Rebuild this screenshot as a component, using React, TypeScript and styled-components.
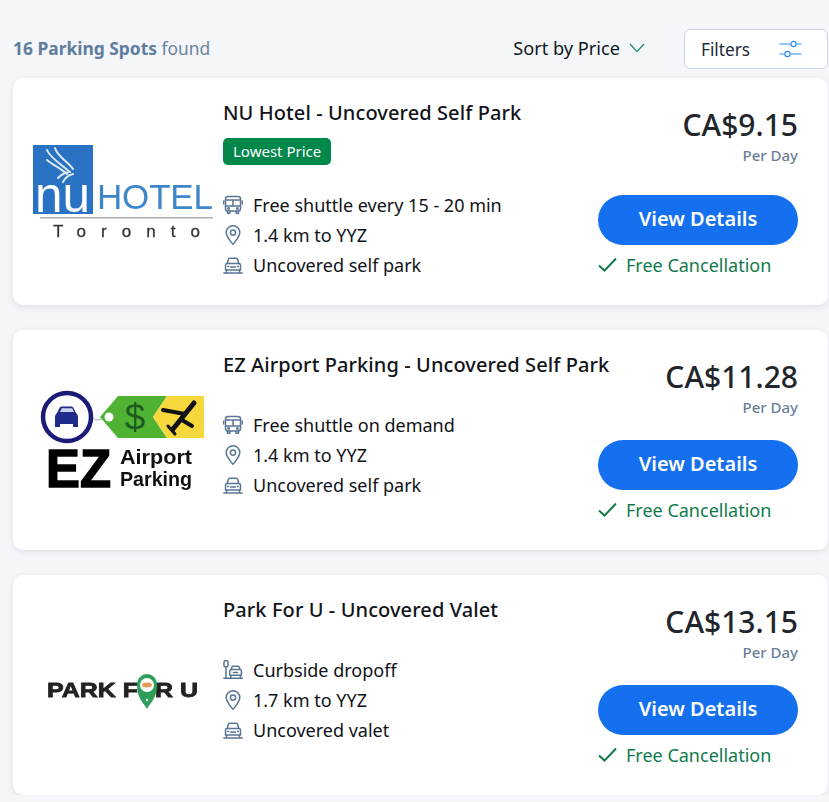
import styled, { createGlobalStyle } from "styled-components";

const GlobalStyle = createGlobalStyle`
  html, body {
    margin: 0;
    padding: 0;
    background: #f4f6f9;
    font-family: "Noto Sans", "Open Sans", sans-serif;
  }
  * {
    box-sizing: border-box;
  }
`;

const Page = styled.div`
  width: 829px;
  padding: 29px 1px 0 13px;
`;

const Toolbar = styled.div`
  display: flex;
  align-items: center;
  height: 40px;
  margin-bottom: 9px;
`;

const Found = styled.div`
  flex: 1;
  font-size: 17.4px;
  color: #6d8299;
  margin-top: -2px;
  & b {
    font-weight: 700;
    color: #5f7d9d;
  }
`;

const Sort = styled.div`
  display: flex;
  align-items: center;
  gap: 9px;
  font-size: 18.2px;
  color: #111820;
  margin-right: 39px;
  margin-top: -2px;
`;

const FilterButton = styled.div`
  width: 144px;
  height: 40px;
  display: flex;
  align-items: center;
  justify-content: space-between;
  padding: 0 25px 0 16px;
  background: #fff;
  border: 1px solid #c8d4e6;
  border-radius: 6px;
  font-size: 17.2px;
  color: #222b36;
`;

const List = styled.div`
  display: flex;
  flex-direction: column;
  gap: 25px;
`;

const Card = styled.div`
  display: flex;
  min-height: 220px;
  background: #fff;
  border-radius: 10px;
  box-shadow: 0 2px 6px rgba(60, 80, 110, 0.12);
`;

const LogoBox = styled.div`
  width: 210px;
  padding-left: 20px;
  display: flex;
  align-items: center;
  flex-shrink: 0;
  & svg {
    display: block;
    filter: blur(0.4px);
  }
`;

const Main = styled.div`
  flex: 1;
  min-width: 0;
  padding: 20px 0 25px;
`;

const Title = styled.div`
  font-size: 20px;
  font-weight: 500;
  letter-spacing: 0.09px;
  line-height: 30px;
  white-space: nowrap;
  color: #111419;
`;

const Badge = styled.div`
  display: inline-block;
  height: 27px;
  line-height: 27px;
  margin-top: 10px;
  padding: 0 10px;
  background: #00874a;
  border-radius: 5px;
  color: #fff;
  font-size: 15px;
`;

const Features = styled.div<{ $top: number }>`
  display: flex;
  flex-direction: column;
  margin-top: ${(p) => p.$top}px;
`;

const Feature = styled.div`
  display: flex;
  align-items: center;
  gap: 10px;
  height: 30px;
  font-size: 18px;
  color: #0f1318;
`;

const Side = styled.div`
  width: 200px;
  margin-right: 30px;
  padding: 29px 0 27px;
  flex-shrink: 0;
  display: flex;
  flex-direction: column;
  justify-content: space-between;
`;

const PriceBlock = styled.div`
  text-align: right;
`;

const Price = styled.div`
  font-size: 30px;
  font-weight: 500;
  line-height: 36px;
  color: #22262b;
`;

const PerDay = styled.div`
  font-size: 15px;
  font-weight: 500;
  line-height: 24px;
  color: #6c7f97;
`;

const Details = styled.div`
  height: 50px;
  padding-bottom: 3px;
  border-radius: 25px;
  background: #1570ef;
  color: #fff;
  font-size: 20px;
  font-weight: 600;
  display: flex;
  align-items: center;
  justify-content: center;
`;

const Cancel = styled.div`
  display: flex;
  align-items: center;
  gap: 9px;
  margin-top: 7px;
  height: 26px;
  font-size: 18px;
  color: #0f7b4b;
`;

const iconProps = {
  width: 20,
  height: 20,
  viewBox: "0 0 20 20",
  fill: "none",
  stroke: "#5a7595",
  strokeWidth: 1.5,
  strokeLinecap: "round" as const,
  strokeLinejoin: "round" as const,
};

const BusIcon = () => (
  <svg {...iconProps}>
    <rect x="2.5" y="1.5" width="15" height="14.5" rx="2.5" />
    <path d="M2.5 5h15M2.5 11h15M10 5v6M.7 6v3M19.3 6v3" />
    <path d="M4.5 16v2.2h2.4V16M13.1 16v2.2h2.4V16" />
    <circle cx="5.6" cy="13.5" r=".7" />
    <circle cx="14.4" cy="13.5" r=".7" />
  </svg>
);

const PinIcon = () => (
  <svg {...iconProps}>
    <path d="M10 19.4C6.5 15 3.2 11.6 3.2 7.6a6.8 6.8 0 0 1 13.6 0c0 4-3.3 7.4-6.8 11.8z" />
    <circle cx="10" cy="7.6" r="2.6" />
  </svg>
);

const CarIcon = () => (
  <svg {...iconProps}>
    <path d="M4.2 8.5l1.2-4.2c.2-.7.8-1.1 1.5-1.1h6.2c.7 0 1.3.4 1.5 1.1l1.2 4.2" />
    <path d="M2.5 10.2c0-1 .7-1.7 1.7-1.7h11.6c1 0 1.7.7 1.7 1.7V15h-15z" />
    <path d="M3.5 15v2M16.500 15v2M.8 18h18.400M7.500 12h5M4.600 11.600h.8M14.600 11.600h.8" />
  </svg>
);

const CurbIcon = () => (
  <svg {...iconProps}>
    <rect x="1" y="0.8" width="4" height="6" rx="1.4" />
    <path d="M3 6.800v11.400M.8 18.200h18.600" />
    <path d="M8.200 9.500l.8-2.400c.2-.6.6-.9 1.200-.9h4.800c.6 0 1 .3 1.200.9l.8 2.400" />
    <path d="M6.800 11c0-.9.6-1.500 1.500-1.500h8.600c.9 0 1.500.6 1.500 1.500v4.200H6.800zM7.800 15.200v3M17.400 15.200v3M10.500 12.600h4.200" />
  </svg>
);

const Chevron = () => (
  <svg width="16" height="10" viewBox="0 0 16 10" fill="none" stroke="#17935f" strokeWidth="1.3">
    <path d="M1 1l7 7.600L15 1" />
  </svg>
);

const Sliders = () => (
  <svg width="23" height="18" viewBox="0 0 23 18" fill="none" stroke="#2a8df0" strokeWidth="1.2">
    <path d="M.5 4h11M17.500 4h5M.5 14h5M11.500 14h11" />
    <circle cx="14.500" cy="4" r="2.600" />
    <circle cx="8.500" cy="14" r="2.600" />
  </svg>
);

const Check = () => (
  <svg width="19" height="16" viewBox="0 0 19 16" fill="none" stroke="#0f7b4b" strokeWidth="2">
    <path d="M1 8.500l5.500 5.200L18 1.500" />
  </svg>
);

const NuLogo = () => (
  <svg width="180" height="180" viewBox="0 0 180 180">
    <rect x="0" y="43" width="60" height="69" fill="#2a73c4" />
    <g fill="none" stroke="#dce9f6" strokeWidth="2" strokeLinecap="round">
      <path d="M14 48c3 8 14 14 23 22" />
      <path d="M22 46c2 8 12 13 18 21" />
      <path d="M14 58c6 5 13 8 20 14" />
      <path d="M25 76c3-3 8-6 12-6" />
      <path d="M30 80c2-4 6-7 10-8" />
    </g>
    <text x="2" y="110" fontFamily="Liberation Sans, sans-serif" fontSize="50" fill="#fff" textLength="55" lengthAdjust="spacingAndGlyphs">
      nu
    </text>
    <text x="64" y="107" fontFamily="Liberation Sans, sans-serif" fontSize="35" fill="#3f86c9" textLength="116" lengthAdjust="spacing">
      HOTEL
    </text>
    <rect x="7" y="115" width="173" height="1.500" fill="#b9a9b0" />
    <text x="20" y="135" fontFamily="Liberation Sans, sans-serif" fontSize="17" fill="#333" stroke="#333" strokeWidth=".3" textLength="147" lengthAdjust="spacing">
      Toronto
    </text>
  </svg>
);

const EzLogo = () => (
  <svg width="180" height="180" viewBox="0 0 180 180">
    <path d="M58 67c4 4 9 4 13 0" fill="none" stroke="#9aa" strokeWidth="1" />
    <circle cx="34" cy="67" r="24" fill="#fff" stroke="#1c1b78" strokeWidth="4.500" />
    <path
      d="M22 77v-10c0-2 .8-3 2-4l2.500-5c.5-1 1.500-1.500 2.500-1.500h9c1 0 2 .5 2.500 1.500l2.500 5c1.200 1 2 2 2 4v10h-5v-3H27v3z"
      fill="#1f2c8c"
    />
    <path d="M27 62l1.800-3.800h10.400L41 62z" fill="#cfd3ea" />
    <path d="M67 67L85 46h49l-14 21 14 21H85z" fill="#4fb233" />
    <path d="M134 46h37v42h-37l-14-21z" fill="#f6d83c" />
    <circle cx="76" cy="67" r="4.500" fill="#fff" />
    <text x="102" y="80" fontFamily="Liberation Sans, sans-serif" fontSize="37" textAnchor="middle" fill="#1d5b20">
      $
    </text>
    <g fill="none" stroke="#111" strokeLinecap="round">
      <path d="M161 53L140 79" strokeWidth="5" />
      <path d="M152 64L130 60" strokeWidth="4" />
      <path d="M149 70L159 76" strokeWidth="4" />
      <path d="M135 76L142 84" strokeWidth="3" />
    </g>
    <text x="13" y="137" fontFamily="Liberation Sans, sans-serif" fontWeight="700" fontSize="54" fill="#000" stroke="#000" strokeWidth="1.500" textLength="65" lengthAdjust="spacingAndGlyphs">
      EZ
    </text>
    <text x="87" y="113.500" fontFamily="Liberation Sans, sans-serif" fontWeight="700" fontSize="20" fill="#111" textLength="72" lengthAdjust="spacingAndGlyphs">
      Airport
    </text>
    <text x="87" y="135.500" fontFamily="Liberation Sans, sans-serif" fontWeight="700" fontSize="20" fill="#111" textLength="72" lengthAdjust="spacingAndGlyphs">
      Parking
    </text>
  </svg>
);

const ParkLogo = () => (
  <svg width="180" height="180" viewBox="0 0 180 180">
    <text x="14" y="102" fontFamily="Liberation Sans, sans-serif" fontWeight="700" fontSize="21" fill="#222" stroke="#222" strokeWidth=".8" textLength="91" lengthAdjust="spacingAndGlyphs">
      PARK F
    </text>
    <text x="122" y="102" fontFamily="Liberation Sans, sans-serif" fontWeight="700" fontSize="21" fill="#222" stroke="#222" strokeWidth=".8" textLength="43" lengthAdjust="spacingAndGlyphs">
      R U
    </text>
    <path d="M114 114c-3-6-10-10-10-25a10 10 0 0 1 20 0c0 15-7 19-10 25z" fill="#2f9e5b" />
    <circle cx="114" cy="90" r="7" fill="#fff" />
    <ellipse cx="114" cy="90" rx="5" ry="2.500" fill="#e59a56" />
    <circle cx="114" cy="105" r="1.200" fill="#fff" />
  </svg>
);

type Spot = {
  title: string;
  logo: React.ReactNode;
  badge?: string;
  price: string;
  featuresTop: number;
  features: { icon: React.ReactNode; text: string }[];
};

const spots: Spot[] = [
  {
    title: "NU Hotel - Uncovered Self Park",
    logo: <NuLogo />,
    badge: "Lowest Price",
    price: "CA$9.15",
    featuresTop: 25,
    features: [
      { icon: <BusIcon />, text: "Free shuttle every 15 - 20 min" },
      { icon: <PinIcon />, text: "1.4 km to YYZ" },
      { icon: <CarIcon />, text: "Uncovered self park" },
    ],
  },
  {
    title: "EZ Airport Parking - Uncovered Self Park",
    logo: <EzLogo />,
    price: "CA$11.28",
    featuresTop: 30,
    features: [
      { icon: <BusIcon />, text: "Free shuttle on demand" },
      { icon: <PinIcon />, text: "1.4 km to YYZ" },
      { icon: <CarIcon />, text: "Uncovered self park" },
    ],
  },
  {
    title: "Park For U - Uncovered Valet",
    logo: <ParkLogo />,
    price: "CA$13.15",
    featuresTop: 30,
    features: [
      { icon: <CurbIcon />, text: "Curbside dropoff" },
      { icon: <PinIcon />, text: "1.7 km to YYZ" },
      { icon: <CarIcon />, text: "Uncovered valet" },
    ],
  },
];

export default function App() {
  return (
    <Page>
      <GlobalStyle />
      <Toolbar>
        <Found>
          <b>16 Parking Spots</b> found
        </Found>
        <Sort>
          Sort by Price
          <Chevron />
        </Sort>
        <FilterButton>
          Filters
          <Sliders />
        </FilterButton>
      </Toolbar>
      <List>
        {spots.map((spot) => (
          <Card key={spot.title}>
            <LogoBox>{spot.logo}</LogoBox>
            <Main>
              <Title>{spot.title}</Title>
              {spot.badge && <Badge>{spot.badge}</Badge>}
              <Features $top={spot.featuresTop}>
                {spot.features.map((f) => (
                  <Feature key={f.text}>
                    {f.icon}
                    {f.text}
                  </Feature>
                ))}
              </Features>
            </Main>
            <Side>
              <PriceBlock>
                <Price>{spot.price}</Price>
                <PerDay>Per Day</PerDay>
              </PriceBlock>
              <div>
                <Details>View Details</Details>
                <Cancel>
                  <Check />
                  Free Cancellation
                </Cancel>
              </div>
            </Side>
          </Card>
        ))}
      </List>
    </Page>
  );
}
